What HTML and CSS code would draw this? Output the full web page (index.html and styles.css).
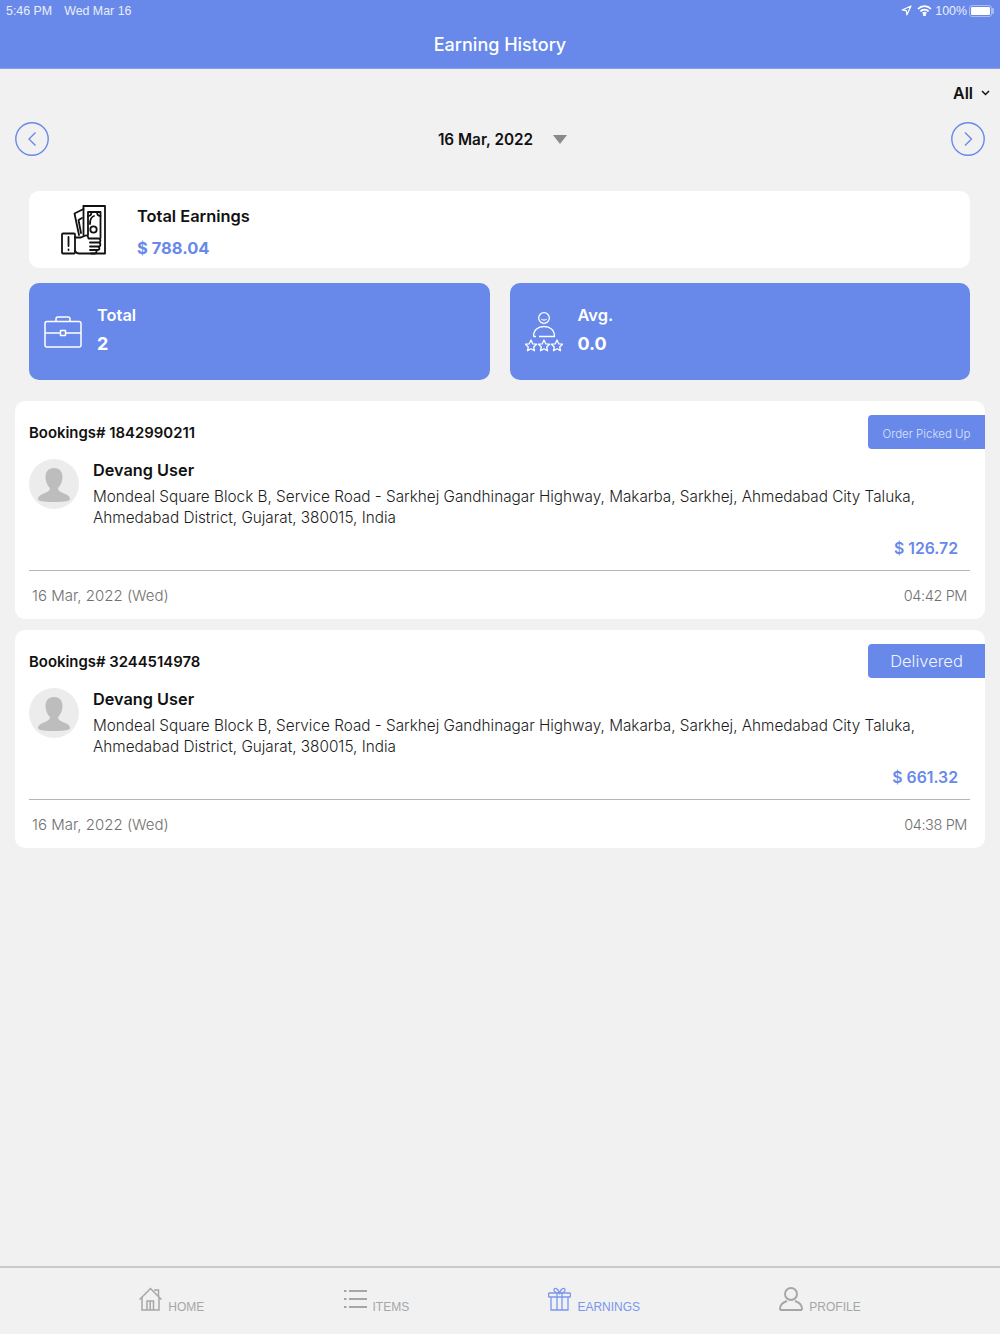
FILE: index.html
```html
<!DOCTYPE html>
<html lang="en">
<head>
    <meta charset="UTF-8">
    <meta name="viewport" content="width=device-width, initial-scale=1.0">
    <title>Earning History</title>
    <link rel="stylesheet" href="styles.css">
</head>
<body>
    <div class="page">
        <!-- Status bar and title -->
        <header class="topbar">
            <div class="status">
                <span class="status-time">5:46 PM</span>
                <span class="status-date">Wed Mar 16</span>
                <span class="status-right">
                    <svg width="11" height="11" viewBox="0 0 11 11" fill="none" stroke="#fff" stroke-width="1.200" stroke-linejoin="round"><path d="M10 1 L1.200 5 L5.300 5.600 L5.900 9.800 Z"/></svg>
                    <svg class="wifi" width="15" height="11" viewBox="0 0 15 11" fill="none" stroke="#fff" stroke-width="1.800"><path d="M1 4 A9 9 0 0 1 14 4"/><path d="M3.400 6.400 A5.600 5.600 0 0 1 11.600 6.400"/><path d="M5.700 8.500 A2.600 2.600 0 0 1 9.300 8.500"/><circle cx="7.500" cy="9.800" r=".6" fill="#fff"/></svg>
                    <span class="status-pct">100%</span>
                    <span class="battery"><span class="battery-fill"></span></span>
                </span>
            </div>
            <h1 class="title">Earning History</h1>
        </header>

        <main class="content">
            <div class="filter">
                <span>All</span>
                <svg width="9" height="6" viewBox="0 0 9 6" fill="none" stroke="#111" stroke-width="1.500"><path d="M1 1 L4.500 4.500 L8 1"/></svg>
            </div>

            <div class="date-nav">
                <button class="round-btn">
                    <svg width="34" height="34" viewBox="0 0 34 34" fill="none" stroke="#6889ea" stroke-width="1.400"><circle cx="17" cy="17" r="16.200"/><path d="M20.500 10.500 L14 17 L20.500 23.500"/></svg>
                </button>
                <div class="date-label">
                    <span>16 Mar, 2022</span>
                    <span class="date-caret"></span>
                </div>
                <button class="round-btn">
                    <svg width="34" height="34" viewBox="0 0 34 34" fill="none" stroke="#6889ea" stroke-width="1.400"><circle cx="17" cy="17" r="16.200"/><path d="M14 10.500 L20.500 17 L14 23.500"/></svg>
                </button>
            </div>

            <section class="total-card">
                <svg class="total-icon" width="45" height="50" viewBox="0 0 45 50" fill="none" stroke="#111" stroke-width="1.800" stroke-linejoin="round" stroke-linecap="round">
                    <path d="M22.500 1 H44 V48.500 H30"/>
                    <path d="M22.500 1 V30"/>
                    <path d="M22.500 4 L13.500 8.500 L18 30"/>
                    <path d="M21 13 L17.500 15 L20 28"/>
                    <path d="M27 30 V7 H39.500 V33"/>
                    <path d="M27 11 C29 11 30.500 9.500 30.500 7 M39.500 11 C37.500 11 36 9.500 36 7"/>
                    <circle cx="32.500" cy="24.500" r="3.200"/>
                    <path d="M33 11 C30 12 29 15 29 19"/>
                    <rect x="1" y="28.500" width="13" height="20" rx="1"/>
                    <path d="M7.500 32 V41 M7.500 44.500 V45"/>
                    <path d="M14 32.500 H20 L24.500 30.500 C26 30 27 31 27.500 33.500 H37.500 C40 33.500 40 37.500 37.500 37.500 H29 M37.500 37.500 C40 37.500 40 41.500 37.500 41.500 H29 M36.500 41.500 C39 41.500 39 45 36.500 45 H29 M34.500 45 C36 45 36 48.500 33.500 48.500 H18 C16 48.500 15 47.500 14 46"/>
                </svg>
                <div class="total-text">
                    <div class="total-label">Total Earnings</div>
                    <div class="total-value">$ 788.04</div>
                </div>
            </section>

            <section class="stats">
                <div class="stat-card">
                    <svg class="stat-icon" width="38" height="32" viewBox="0 0 38 32" fill="none" stroke="#fff" stroke-width="1.500" stroke-linejoin="round">
                        <rect x="1" y="5.500" width="36" height="25.500" rx="2"/>
                        <path d="M12 5.500 V2.800 C12 1.800 13 1 14 1 H24 C25 1 26 1.800 26 2.800 V5.500"/>
                        <path d="M1 17 H16.500 M21.500 17 H37"/>
                        <rect x="16.500" y="14.500" width="5" height="5"/>
                    </svg>
                    <div class="stat-text">
                        <div class="stat-label">Total</div>
                        <div class="stat-value">2</div>
                    </div>
                </div>
                <div class="stat-card">
                    <svg class="stat-icon" width="38" height="40" viewBox="0 0 38 40" fill="none" stroke="#fff" stroke-width="1.300" stroke-linejoin="round">
                        <circle cx="19" cy="6" r="5.300"/>
                        <path d="M16.500 7 C17.500 8.500 20.500 8.500 21.500 7"/>
                        <path d="M8.500 24.500 C8.500 18 13 14.500 19 14.500 C25 14.500 29.500 18 29.500 24.500 H14 M11 24.500 H8.500"/>
                        <path d="M6 28 L7.700 31.800 L11.600 32.200 L8.700 34.900 L9.500 38.800 L6 36.800 L2.500 38.800 L3.300 34.900 L.4 32.200 L4.300 31.800 Z"/>
                        <path d="M19 28 L20.700 31.800 L24.600 32.200 L21.700 34.900 L22.500 38.800 L19 36.800 L15.500 38.800 L16.300 34.900 L13.400 32.200 L17.300 31.800 Z"/>
                        <path d="M32 28 L33.700 31.800 L37.600 32.200 L34.700 34.900 L35.500 38.800 L32 36.800 L28.500 38.800 L29.300 34.900 L26.400 32.200 L30.300 31.800 Z"/>
                    </svg>
                    <div class="stat-text">
                        <div class="stat-label">Avg.</div>
                        <div class="stat-value">0.0</div>
                    </div>
                </div>
            </section>

            <!-- Bookings -->
            <article class="booking">
                <div class="booking-head">
                    <div class="booking-id">Bookings# 1842990211</div>
                    <div class="badge badge-small">Order Picked Up</div>
                </div>
                <div class="booking-user">
                    <svg class="avatar" width="50" height="50" viewBox="0 0 50 50"><circle cx="25" cy="25" r="25" fill="#ececec"/><path d="M25 9 C31 9 33.500 13 33.500 18 C33.500 23 31 27 29 29 C29 32 32 33 36 35 C40 36.500 41 38.500 41 40 C41 42 37 43 25 43 C13 43 9 42 9 40 C9 38.500 10 36.500 14 35 C18 33 21 32 21 29 C19 27 16.500 23 16.500 18 C16.500 13 19 9 25 9 Z" fill="#bdbdbd"/></svg>
                    <div>
                        <div class="user-name">Devang User</div>
                        <div class="user-address">Mondeal Square Block B, Service Road - Sarkhej Gandhinagar Highway, Makarba, Sarkhej, Ahmedabad City Taluka, Ahmedabad District, Gujarat, 380015, India</div>
                    </div>
                </div>
                <div class="booking-amount">$ 126.72</div>
                <div class="booking-foot">
                    <span>16 Mar, 2022 (Wed)</span>
                    <span class="booking-time">04:42 PM</span>
                </div>
            </article>

            <article class="booking">
                <div class="booking-head">
                    <div class="booking-id">Bookings# 3244514978</div>
                    <div class="badge">Delivered</div>
                </div>
                <div class="booking-user">
                    <svg class="avatar" width="50" height="50" viewBox="0 0 50 50"><circle cx="25" cy="25" r="25" fill="#ececec"/><path d="M25 9 C31 9 33.500 13 33.500 18 C33.500 23 31 27 29 29 C29 32 32 33 36 35 C40 36.500 41 38.500 41 40 C41 42 37 43 25 43 C13 43 9 42 9 40 C9 38.500 10 36.500 14 35 C18 33 21 32 21 29 C19 27 16.500 23 16.500 18 C16.500 13 19 9 25 9 Z" fill="#bdbdbd"/></svg>
                    <div>
                        <div class="user-name">Devang User</div>
                        <div class="user-address">Mondeal Square Block B, Service Road - Sarkhej Gandhinagar Highway, Makarba, Sarkhej, Ahmedabad City Taluka, Ahmedabad District, Gujarat, 380015, India</div>
                    </div>
                </div>
                <div class="booking-amount">$ 661.32</div>
                <div class="booking-foot">
                    <span>16 Mar, 2022 (Wed)</span>
                    <span class="booking-time">04:38 PM</span>
                </div>
            </article>
        </main>

        <!-- Bottom tabs -->
        <nav class="tabs">
            <div class="tab">
                <svg width="23" height="24" viewBox="0 0 23 24" fill="none" stroke="#a6a6a6" stroke-width="1.500"><path d="M.6 12.500 L11.500 1.500 L22.400 12.500"/><path d="M16 4 V3 H19.500 V9.500"/><path d="M3 10.500 V23 H20 V10.500"/><path d="M8 23 V14 H14.500 V23"/><path d="M11.200 14 V23"/></svg>
                <span>HOME</span>
            </div>
            <div class="tab">
                <svg width="23" height="24" viewBox="0 0 23 24" fill="none" stroke="#a6a6a6" stroke-width="2"><path d="M5 4 H23 M5 12 H23 M5 20 H23"/><path d="M0 4 H2.500 M0 12 H2.500 M0 20 H2.500"/></svg>
                <span>ITEMS</span>
            </div>
            <div class="tab tab-active">
                <svg width="23" height="24" viewBox="0 0 23 24" fill="none" stroke="#7a97ee" stroke-width="1.300"><rect x=".6" y="6" width="21.800" height="4" rx=".8"/><path d="M3 10 V23 H20 V10"/><path d="M9 6 V23 M14 6 V23"/><path d="M11.500 6 C8 6 5.500 4.500 6 2.500 C6.500 .5 10 1 11.500 6 C13 1 16.500 .5 17 2.500 C17.500 4.500 15 6 11.500 6 Z"/></svg>
                <span>EARNINGS</span>
            </div>
            <div class="tab">
                <svg width="24" height="24" viewBox="0 0 24 24" fill="none" stroke="#a6a6a6" stroke-width="1.900"><circle cx="12" cy="7" r="6"/><path d="M1 23 V22 C1 17.500 4.500 15.200 8 14 M23 23 V22 C23 17.500 19.500 15.200 16 14 M1 23 H23"/></svg>
                <span>PROFILE</span>
            </div>
        </nav>
    </div>
</body>
</html>
```

FILE: styles.css
```css
/* Page shell */
* {
    box-sizing: border-box;
}

body {
    margin: 0;
    font-family: Inter, "Noto Sans", sans-serif;
    background-color: #f1f1f1;
    color: #111;
}

.page {
    display: flex;
    flex-direction: column;
    height: 1334px;
    overflow: hidden;
}

/* Blue top bar */
.topbar {
    height: 69px;
    background-color: #6889ea;
    border-bottom: 1px solid #86a0ef;
    color: #fff;
    flex: none;
}

.status {
    display: flex;
    align-items: center;
    height: 21px;
    padding: 0 5px 0 6px;
    font-family: "Liberation Sans", Arial, sans-serif;
    font-size: 12.400px;
    color: #e9eefc;
}

.status-date {
    margin-left: 12px;
}

.status-right {
    display: flex;
    align-items: center;
    gap: 3px;
    margin-left: auto;
}

.wifi {
    margin-left: 2px;
}

.battery {
    position: relative;
    display: flex;
    width: 23px;
    height: 12px;
    margin: 0 3px 0 -1px;
    padding: 1px;
    border: 1px solid #a8bbf4;
    border-radius: 3px;
}

/* battery nub */
.battery::after {
    content: "";
    position: absolute;
    top: 2px;
    right: -3px;
    width: 2px;
    height: 6px;
    background-color: #a8bbf4;
    border-radius: 0 1px 1px 0;
}

.battery-fill {
    flex: 1;
    background-color: #fff;
    border-radius: 1px;
}

.title {
    margin: 4px 0 0;
    font-size: 18px;
    font-weight: 500;
    line-height: 40px;
    text-align: center;
}

/* Main scroll area */
.content {
    flex: 1;
    padding: 0 15px;
}

.filter {
    display: flex;
    align-items: center;
    justify-content: flex-end;
    gap: 8px;
    height: 24px;
    margin: 12px -5px 0 0;
    font-size: 16px;
    font-weight: 600;
}

.date-nav {
    display: flex;
    align-items: center;
    justify-content: space-between;
    height: 34px;
    margin-top: 17px;
}

.round-btn {
    width: 34px;
    height: 34px;
    padding: 0;
    border: none;
    background: none;
}

.date-label {
    display: flex;
    align-items: center;
    gap: 20px;
    margin-left: 5px;
    font-size: 15.300px;
    font-weight: 600;
}

.date-caret {
    width: 0;
    height: 0;
    border-left: 7.500px solid transparent;
    border-right: 7.500px solid transparent;
    border-top: 9px solid #8a8a8a;
}

/* Summary cards */
.total-card {
    display: flex;
    align-items: center;
    height: 77px;
    margin: 35px 15px 0 14px;
    padding-left: 32px;
    background-color: #fff;
    border-radius: 10px;
}

.total-icon {
    flex: none;
    margin-top: 1px;
}

.total-text {
    margin: 4px 0 0 31px;
}

.total-label {
    font-size: 16.400px;
    font-weight: 600;
    line-height: 24px;
}

.total-value {
    margin-top: 8px;
    font-size: 16.500px;
    font-weight: 700;
    line-height: 24px;
    color: #6889ea;
}

.stats {
    display: flex;
    gap: 20px;
    margin: 15px 15px 0 14px;
}

.stat-card {
    display: flex;
    flex: 1;
    align-items: center;
    height: 97px;
    padding-left: 15px;
    gap: 15px;
    background-color: #6889ea;
    border-radius: 10px;
    color: #fff;
}

.stat-text {
    margin-bottom: 4px;
}

.stat-label {
    font-size: 16.400px;
    font-weight: 600;
    line-height: 24px;
}

.stat-value {
    margin-top: 4px;
    font-size: 18px;
    font-weight: 700;
    line-height: 26px;
}

/* Booking rows */
.booking {
    height: 218px;
    margin-top: 11px;
    padding: 14px 0 0 14px;
    background-color: #fff;
    border-radius: 10px;
}

.stats + .booking {
    margin-top: 21px;
}

.booking-head {
    display: flex;
    align-items: center;
    justify-content: space-between;
}

.booking-id {
    margin-top: 2px;
    font-size: 14.900px;
    font-weight: 600;
}

.badge {
    width: 117px;
    height: 34px;
    padding-top: 1px;
    font-size: 16.500px;
    font-weight: 300;
    line-height: 32px;
    text-align: center;
    color: #f1f4fd;
    background-color: #6889ea;
    border-radius: 4px 0 0 4px;
}

.badge-small {
    padding-top: 3px;
    font-size: 11.500px;
    color: #dbe3fa;
}

.booking-user {
    display: flex;
    gap: 14px;
    margin-top: 9px;
    padding-right: 15px;
}

.avatar {
    flex: none;
    margin-top: 1px;
}

.user-name {
    font-size: 16.300px;
    font-weight: 600;
    line-height: 24px;
}

.user-address {
    margin-top: 4px;
    font-size: 15.300px;
    font-weight: 300;
    line-height: 21px;
    color: #1c1c1c;
}

.booking-amount {
    margin-top: 9px;
    padding-right: 27px;
    font-size: 15.800px;
    font-weight: 600;
    line-height: 24px;
    text-align: right;
    color: #6889ea;
}

.booking-foot {
    display: flex;
    justify-content: space-between;
    height: 50px;
    margin: 9px 15px 0 0;
    padding: 0 3px;
    border-top: 1px solid #b5b5b5;
    font-size: 15px;
    font-weight: 300;
    line-height: 50px;
    color: #707070;
}

.booking-time {
    font-size: 14.500px;
    letter-spacing: -0.400px;
}

/* Bottom tabs */
.tabs {
    display: flex;
    flex: none;
    justify-content: space-evenly;
    height: 68px;
    padding-top: 19px;
    background-color: #f1f1f1;
    border-top: 2px solid #c9c9c9;
}

.tab {
    display: flex;
    align-items: flex-end;
    gap: 6px;
    height: 24px;
    font-family: "Liberation Sans", Arial, sans-serif;
    font-size: 12px;
    color: #a6a6a6;
}

.tab span {
    line-height: 14px;
    margin-bottom: -3px;
}

.tab-active {
    color: #7a97ee;
}
```
